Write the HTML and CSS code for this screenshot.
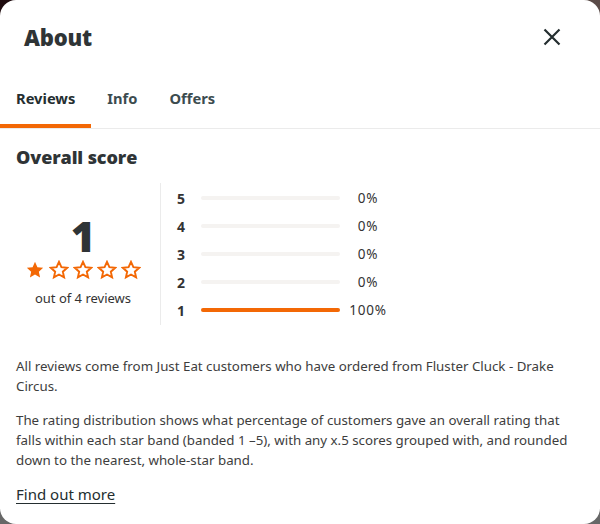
FILE: index.html
```html
<!DOCTYPE html>
<html lang="en">
<head>
<meta charset="utf-8">
<title>About</title>
<link rel="stylesheet" href="styles.css">
</head>
<body>
<svg class="defs" width="0" height="0" aria-hidden="true">
  <defs>
    <symbol id="star" viewBox="0 0 24 24">
      <path d="M12 2.2l2.9 6.4 6.9.7-5.2 4.7 1.5 6.9L12 17.4l-6.1 3.5 1.5-6.9-5.2-4.7 6.9-.7z"/>
    </symbol>
  </defs>
</svg>
<div class="modal">
  <header class="header">
    <h1 class="title">About</h1>
    <button class="close" aria-label="Close">
      <svg viewBox="0 0 24 24" width="24" height="24"><path d="M4.5 4.5L19.5 19.5M19.5 4.5L4.5 19.5" stroke="#242e30" stroke-width="2.2" fill="none"/></svg>
    </button>
  </header>
  <nav class="tabs">
    <div class="tab active">Reviews</div>
    <div class="tab">Info</div>
    <div class="tab">Offers</div>
  </nav>
  <section class="content">
    <h2 class="subtitle">Overall score</h2>
    <div class="score">
      <div class="summary">
        <div class="big">1</div>
        <div class="stars">
          <svg class="star full"><use href="#star"/></svg>
          <svg class="star empty"><use href="#star"/></svg>
          <svg class="star empty"><use href="#star"/></svg>
          <svg class="star empty"><use href="#star"/></svg>
          <svg class="star empty"><use href="#star"/></svg>
        </div>
        <div class="count">out of 4 reviews</div>
      </div>
      <div class="bars">
        <div class="row"><span class="lbl">5</span><span class="track"><span class="fill" style="width:0%"></span></span><span class="pct">0%</span></div>
        <div class="row"><span class="lbl">4</span><span class="track"><span class="fill" style="width:0%"></span></span><span class="pct">0%</span></div>
        <div class="row"><span class="lbl">3</span><span class="track"><span class="fill" style="width:0%"></span></span><span class="pct">0%</span></div>
        <div class="row"><span class="lbl">2</span><span class="track"><span class="fill" style="width:0%"></span></span><span class="pct">0%</span></div>
        <div class="row"><span class="lbl">1</span><span class="track"><span class="fill" style="width:100%"></span></span><span class="pct">100%</span></div>
      </div>
    </div>
    <p class="text">All reviews come from Just Eat customers who have ordered from Fluster Cluck - Drake Circus.</p>
    <p class="text">The rating distribution shows what percentage of customers gave an overall rating that falls within each star band (banded 1 –5), with any x.5 scores grouped with, and rounded down to the nearest, whole-star band.</p>
    <a class="more" href="#">Find out more</a>
  </section>
</div>
</body>
</html>
```
FILE: styles.css
```css
html, body {
  margin: 0;
  padding: 0;
}
body {
  width: 600px;
  height: 524px;
  overflow: hidden;
  background: linear-gradient(to right, #1e0b0e, #5a4b48) top / 100% 50% no-repeat, #676767;
  font-family: "Noto Sans", "Open Sans", sans-serif;
  color: #242e30;
}
.defs {
  display: block;
  width: 0;
  height: 0;
}
.modal {
  width: 600px;
  height: 524px;
  background: #fff;
  border-radius: 16px;
  overflow: hidden;
}
.header {
  height: 74px;
  display: flex;
  align-items: center;
  justify-content: space-between;
  padding: 0 36px 0 24px;
  box-sizing: border-box;
}
.title {
  margin: 0;
  font-family: "Open Sans", "Noto Sans", sans-serif;
  font-weight: 800;
  font-size: 22px;
  letter-spacing: -0.2px;
  color: #2f3436;
}
.close {
  border: 0;
  background: none;
  padding: 0;
  width: 24px;
  height: 24px;
  display: flex;
}
.tabs {
  display: flex;
  border-bottom: 1px solid #ebebeb;
}
.tab {
  height: 54px;
  box-sizing: border-box;
  padding: 0 16px 2px;
  display: flex;
  align-items: center;
  font-size: 14.7px;
  font-weight: 700;
  color: #3c4c4f;
  border-bottom: 4px solid transparent;
}
.tab.active {
  color: #242e30;
  border-bottom-color: #f36805;
}
.content {
  padding: 0 16px;
}
.subtitle {
  margin: 16px 0 14px;
  font-family: "Open Sans", "Noto Sans", sans-serif;
  font-weight: 800;
  font-size: 18px;
  line-height: 24px;
  letter-spacing: -0.1px;
  color: #2f3436;
}
.score {
  display: flex;
  align-items: center;
  margin-top: 14px;
}
.summary {
  width: 134px;
  margin-right: 10px;
  display: flex;
  flex-direction: column;
  align-items: center;
  padding-top: 12px;
}
.big {
  font-family: "Open Sans", "Noto Sans", sans-serif;
  font-weight: 800;
  font-size: 42px;
  line-height: 44px;
  color: #2f3436;
}
.stars {
  display: flex;
  gap: 4px;
  margin-top: 2px;
}
.star {
  width: 20px;
  height: 20px;
}
.star.full {
  fill: #f36805;
}
.star.empty {
  fill: none;
  stroke: #f36805;
  stroke-width: 2.3;
}
.count {
  margin-top: 9px;
  font-size: 13px;
  line-height: 18px;
  color: #333;
}
.bars {
  border-left: 1px solid #ebebeb;
  padding: 1px 0 1px 16px;
}
.row {
  height: 28px;
  display: flex;
  align-items: center;
}
.lbl {
  width: 24px;
  font-size: 14px;
  font-weight: 700;
  color: #333;
}
.track {
  width: 139px;
  height: 4px;
  border-radius: 2px;
  background: #f5f3f1;
  display: flex;
}
.fill {
  height: 4px;
  border-radius: 2px;
  background: #f36805;
}
.pct {
  width: 56px;
  text-align: center;
  font-size: 13.5px;
  color: #333;
  letter-spacing: 0.8px;
}
.text {
  margin: 31px 0 0;
  font-size: 13.3px;
  line-height: 20px;
  color: #3d3d3d;
}
.text + .text {
  margin-top: 14px;
}
.more {
  display: inline-block;
  margin-top: 14px;
  font-size: 15px;
  line-height: 20px;
  color: #242e30;
  text-decoration: underline;
  text-underline-offset: 3px;
}
```
